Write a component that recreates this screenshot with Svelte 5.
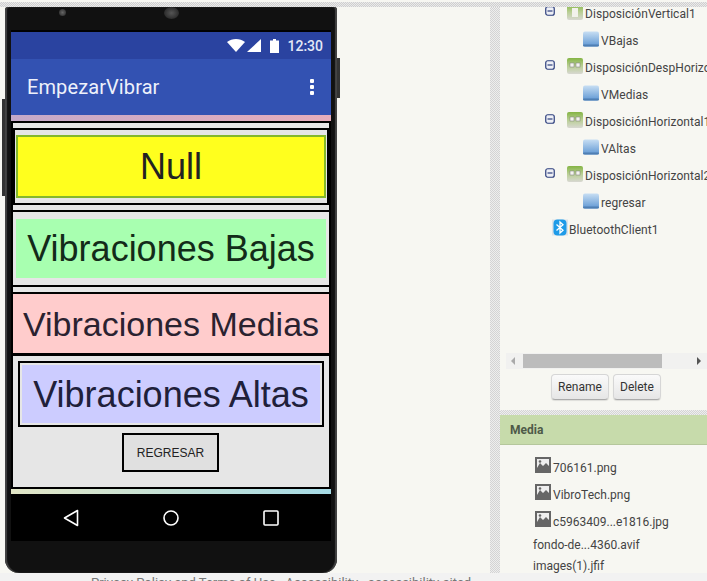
<script>
  const tree = [
    { name: 'DisposiciónVertical1', first: true },
    { name: 'VBajas', leaf: true },
    { name: 'DisposiciónDespHorizontal1' },
    { name: 'VMedias', leaf: true },
    { name: 'DisposiciónHorizontal1' },
    { name: 'VAltas', leaf: true },
    { name: 'DisposiciónHorizontal2' },
    { name: 'regresar', leaf: true }
  ];
  const images = ['706161.png', 'VibroTech.png', 'c5963409...e1816.jpg'];
</script>

<div class="page">
  <div class="topstrip"></div>
  <div class="main">
    <div class="left">
      <div class="phone">
        <span class="btn-left"></span>
        <span class="btn-right"></span>
        <div class="bezel-top">
          <span class="cam"></span>
          <span class="speaker"></span>
        </div>
        <div class="screen">
          <div class="status">
            <svg class="st-wifi" viewBox="0 0 18 13" width="18" height="13"><path d="M0 3C5-1 13-1 18 3L9 13z" fill="#fff"/></svg>
            <svg class="st-signal" viewBox="0 0 14 13" width="14" height="13"><path d="M14 0V13H0z" fill="#fff"/></svg>
            <svg class="st-batt" viewBox="0 0 9 14" width="9" height="14"><path d="M3 0h3v1.500h3V14H0V1.500h3z" fill="#fff"/></svg>
            <span class="time">12:30</span>
          </div>
          <div class="appbar">
            <span class="title">EmpezarVibrar</span>
            <span class="dots"><i></i><i></i><i></i></span>
          </div>
          <div class="strip-top"></div>
          <div class="content">
            <div class="bar bar1"></div>
            <div class="nullwrap">
              <div class="nullbtn">Null</div>
            </div>
            <div class="bar bar2"></div>
            <div class="bajaswrap">
              <div class="bajas">Vibraciones Bajas</div>
            </div>
            <div class="bar bar3"></div>
            <div class="medias">Vibraciones Medias</div>
            <div class="last">
              <div class="altasframe">
                <div class="altas">Vibraciones Altas</div>
              </div>
              <div class="regresar"><span>REGRESAR</span></div>
            </div>
          </div>
          <div class="strip-bottom"></div>
          <div class="nav">
            <svg viewBox="0 0 16 18" width="16" height="18"><path d="M14.500 1.500V16.500L1.500 9z" fill="none" stroke="#fff" stroke-width="1.600" stroke-linejoin="round"/></svg>
            <svg viewBox="0 0 16 16" width="16" height="16"><circle cx="8" cy="8" r="7" fill="none" stroke="#fff" stroke-width="1.600"/></svg>
            <svg viewBox="0 0 16 16" width="16" height="16"><rect x="1" y="1" width="14" height="14" rx="1" fill="none" stroke="#fff" stroke-width="1.600"/></svg>
          </div>
        </div>
      </div>
    </div>

    <div class="gutter"></div>

    <div class="right">
      <div class="treepanel">
        <div class="tree">
          {#each tree as row}
            <div class="row" class:leaf={row.leaf}>
              {#if row.leaf}
                <svg class="ic-btn" viewBox="0 0 16 16" width="16" height="16">
                  <defs><linearGradient id="bl" x1="0" y1="0" x2="0" y2="1"><stop offset="0" stop-color="#c7def3"/><stop offset="1" stop-color="#5f97d3"/></linearGradient></defs>
                  <rect x="0" y="0.500" width="16" height="15" rx="2" fill="url(#bl)"/>
                  <rect x="0" y="13.500" width="16" height="2" rx="1" fill="#4f7fb3"/>
                </svg>
              {:else}
                <svg class="minus" viewBox="0 0 10 10" width="10" height="10"><rect x="0.750" y="0.750" width="8.500" height="8.500" rx="2" fill="#eef0f6" stroke="#2d3f7d" stroke-width="1.200"/><path d="M2.500 5h5" stroke="#2d3f7d" stroke-width="1.200"/></svg>
                <svg class="ic-box" viewBox="0 0 16 16" width="16" height="16">
                  <defs><linearGradient id="gr" x1="0" y1="0" x2="0" y2="1"><stop offset="0" stop-color="#84b444"/><stop offset="0.500" stop-color="#b9cf94"/><stop offset="1" stop-color="#d8d8d2"/></linearGradient></defs>
                  <rect width="16" height="16" rx="2" fill="url(#gr)"/>
                  {#if row.first}
                    <rect x="5" y="4" width="6" height="9" fill="#f2f2ec"/>
                  {:else}
                    <rect x="3" y="5" width="4" height="4" fill="#f4f4ee" stroke="#777" stroke-width="0.500"/>
                    <rect x="9" y="5" width="4" height="4" fill="#f4f4ee" stroke="#777" stroke-width="0.500"/>
                  {/if}
                </svg>
              {/if}
              <span class="label">{row.name}</span>
            </div>
          {/each}
          <div class="row bt">
            <svg class="ic-bt" viewBox="0 0 16 16" width="16" height="17">
              <rect width="16" height="16" fill="#dde3e8"/>
              <rect x="1.500" y="0" width="13" height="16" rx="4" fill="#1e9be8"/>
              <path d="M4.500 5L11 10.800 8 13.500V2.500L11 5.200 4.500 11" fill="none" stroke="#fff" stroke-width="1.300"/>
            </svg>
            <span class="label">BluetoothClient1</span>
          </div>
        </div>
        <div class="hscroll">
          <svg viewBox="0 0 4 8" width="4" height="8"><path d="M4 0V8L0 4z" fill="#aaa"/></svg>
          <span class="track"><span class="thumb"></span></span>
          <svg viewBox="0 0 4 8" width="4" height="8"><path d="M0 0V8L4 4z" fill="#555"/></svg>
        </div>
        <div class="actions">
          <button class="rename">Rename</button>
          <button class="delete">Delete</button>
        </div>
      </div>
      <div class="hgutter"></div>
      <div class="mediahead">Media</div>
      <div class="media">
        {#each images as name}
          <div class="mrow">
            <svg viewBox="0 0 16 16" width="16" height="16">
              <rect width="16" height="16" fill="#666"/>
              <rect x="2" y="2" width="12" height="9" fill="#eee"/>
              <path d="M2 11l3-5 3 3 3-3 3 3v2z" fill="#666"/>
              <circle cx="5" cy="4.500" r="1.300" fill="#666"/>
            </svg>
            <span>{name}</span>
          </div>
        {/each}
        <div class="plain first">fondo-de...4360.avif</div>
        <div class="plain">images(1).jfif</div>
      </div>
    </div>
  </div>
  <div class="footer">Privacy Policy and Terms of Use &nbsp; Accessibility &nbsp; accessibility-sited</div>
</div>

<style>
  :global(body) { margin: 0; background: #f7f7f2; }
  .page {
    width: 707px; height: 581px; overflow: hidden;
    display: flex; flex-direction: column;
    font-family: Roboto, "Liberation Sans", sans-serif;
    background: #f7f7f2;
  }
  .topstrip {
    height: 5px; margin-top: 2px; flex: none;
    background: repeating-conic-gradient(#cfcfcf 0 25%, #eaeaea 0 50%) 0 0 / 2px 2px;
  }
  .main { height: 566px; flex: none; display: flex; }
  .left { width: 490px; flex: none; padding-left: 5px; box-sizing: border-box; }
  .phone {
    position: relative;
    width: 332px; height: 566px; box-sizing: border-box;
    padding: 0 6px;
    background: #111;
    border-radius: 3px 3px 14px 14px;
    box-shadow: inset 2px 0 1px #444, inset -2px 0 1px #444;
  }
  .btn-left { position: absolute; left: -3px; top: 92px; width: 3px; height: 97px; background: #333; }
  .btn-right { position: absolute; right: -3px; top: 51px; width: 3px; height: 40px; background: #333; }
  .bezel-top { height: 23px; position: relative; }
  .cam { position: absolute; left: 48px; top: 2px; width: 7px; height: 7px; border-radius: 50%; background: radial-gradient(#666, #222); }
  .speaker { position: absolute; left: 153px; top: 0; width: 15px; height: 12px; border-radius: 50%; background: radial-gradient(#555, #1a1a1a); }
  .screen { border-top: 2px solid #000; background: #000; width: 320px; }
  .status {
    height: 27px; background: #2a43a0; color: #e4e8f6;
    display: flex; align-items: center; justify-content: flex-end;
    padding-right: 8px; box-sizing: border-box;
  }
  .st-signal { margin-left: 2px; }
  .st-batt { margin-left: 9px; }
  .time { margin-left: 8px; font-size: 14px; font-weight: 500; }
  .appbar {
    height: 56px; background: #3352b2; color: #fff;
    display: flex; align-items: center; justify-content: space-between;
    padding: 0 16px; box-sizing: border-box;
  }
  .title { font-size: 20px; font-weight: 400; color: #eef1fb; letter-spacing: 0.1px; }
  .dots { display: flex; flex-direction: column; gap: 2px; margin-right: 1px; }
  .dots i { width: 4px; height: 4px; background: #fff; border-radius: 1px; display: block; }
  .strip-top { height: 6px; background: linear-gradient(90deg, #c4a9c9, #e6adbb); }
  .content { height: 368px; padding: 2px 2px 0; box-sizing: border-box; display: flex; flex-direction: column; }
  .bar { background: #e6e6e6; flex: none; }
  .bar1 { height: 5px; }
  .bar2 { height: 5px; margin-top: 2px; }
  .bar3 { height: 5px; margin-top: 2px; }
  .nullwrap {
    margin: 2px 2px 0; height: 73px; box-sizing: border-box;
    padding: 5px 1px 0; background: #e6e6e6; flex: none;
  }
  .nullbtn {
    height: 63px; box-sizing: border-box; background: #ffff1e;
    border: 2px solid #84b82c; color: #222;
    font: 36px/59px "Liberation Sans", Arial, sans-serif; text-align: center;
  }
  .bajaswrap {
    margin-top: 2px; height: 73px; box-sizing: border-box;
    padding: 7px 3px 0; background: #e6e6e6; flex: none;
  }
  .bajas {
    height: 59px; background: #a8ffb0; color: #132b19;
    font: 36px/59px "Liberation Sans", Arial, sans-serif; text-align: center; white-space: nowrap;
  }
  .medias {
    margin-top: 2px; height: 59px; background: #ffcccc; color: #2a2230; flex: none;
    font: 34px/61px "Liberation Sans", Arial, sans-serif; text-align: center; white-space: nowrap;
  }
  .last { margin-top: 3px; height: 131px; background: #e6e6e6; flex: none; padding-top: 5px; box-sizing: border-box; }
  .altasframe {
    margin: 0 5px; height: 66px; box-sizing: border-box;
    border: 2px solid #000; padding: 2px;
  }
  .altas {
    height: 58px; background: #ccccff; color: #20203a;
    font: 36px/60px "Liberation Sans", Arial, sans-serif; text-align: center; white-space: nowrap;
  }
  .regresar {
    margin: 6px 0 0 109px; width: 97px; height: 39px; box-sizing: border-box;
    border: 2px solid #000; background: #e0e0e0; color: #222;
    font: 12px/37px "Liberation Sans", Arial, sans-serif; text-align: center;
  }
  .strip-bottom { height: 5px; background: linear-gradient(90deg, #e2e6c6, #a6dbe6); }
  .nav {
    height: 46px; background: #000; display: flex; align-items: center;
    padding: 1px 0 0 52px; gap: 84px;
  }

  .gutter {
    width: 10px; flex: none;
    background: repeating-conic-gradient(#d4d4d4 0 25%, #eeeeee 0 50%) 0 0 / 2px 2px;
  }
  .right { width: 207px; flex: none; display: flex; flex-direction: column; overflow: hidden; color: #444; font-size: 12px; }
  .treepanel { height: 403px; flex: none; overflow: hidden; position: relative; }
  .tree { margin-top: -7px; height: 353px; }
  .row {
    height: 27px; display: flex; align-items: center; white-space: nowrap;
    padding-left: 45px; box-sizing: border-box;
  }
  .minus { margin-top: -5px; flex: none; }
  .ic-box { margin: -3px 2px 0 12px; flex: none; }
  .row.leaf { padding-left: 83px; }
  .ic-btn { margin: -3px 2px 0 0; flex: none; }
  .row.bt { padding-left: 52px; }
  .ic-bt { margin: -4px 1px 0 0; flex: none; }
  .label { font-size: 12px; letter-spacing: 0.05px; }
  .hscroll {
    height: 16px; margin: 0 0 0 6px; background: #f1f1f0;
    display: flex; align-items: center; padding: 0 6px 0 5px; box-sizing: border-box;
  }
  .track { flex: 1; margin: 0 34px 0 8px; height: 14px; display: block; }
  .thumb { display: block; width: 139px; height: 14px; background: #bcbcbc; }
  .hscroll svg:last-child { margin-left: -3px; }
  .actions { display: flex; gap: 4px; padding: 5px 0 0 51px; }
  button {
    height: 26px; padding: 0; box-sizing: border-box;
    border: 1px solid #d6d6d6; border-bottom-color: #aaa; border-radius: 4px;
    background: linear-gradient(#fafafa, #e6e6e6);
    color: #333; font: 12px Roboto, sans-serif;
    box-shadow: 0 1px 1px rgba(0,0,0,.1);
  }
  .rename { width: 58px; }
  .delete { width: 48px; }
  .hgutter {
    height: 5px; flex: none;
    background: repeating-conic-gradient(#d4d4d4 0 25%, #eeeeee 0 50%) 0 0 / 2px 2px;
  }
  .mediahead {
    height: 30px; flex: none; box-sizing: border-box;
    background: #c7dbab; border-bottom: 1px solid #b5c79c;
    font-weight: 700; font-size: 12px; line-height: 31px; color: #4e5a48; padding-left: 10px;
  }
  .media { flex: 1; padding: 9px 0 0 35px; overflow: hidden; }
  .mrow { height: 27px; display: flex; align-items: center; }
  .mrow svg { margin: -6px 2px 0 0; flex: none; }
  .plain { margin-left: -2px; height: 21px; line-height: 21px; }
  .plain.first { height: 21px; line-height: 20px; }
  .footer {
    flex: 1; background: #f2f2f2; color: #777; font-size: 13px; line-height: 15px;
    padding: 2px 0 0 91px; white-space: pre; overflow: hidden;
  }
</style>
